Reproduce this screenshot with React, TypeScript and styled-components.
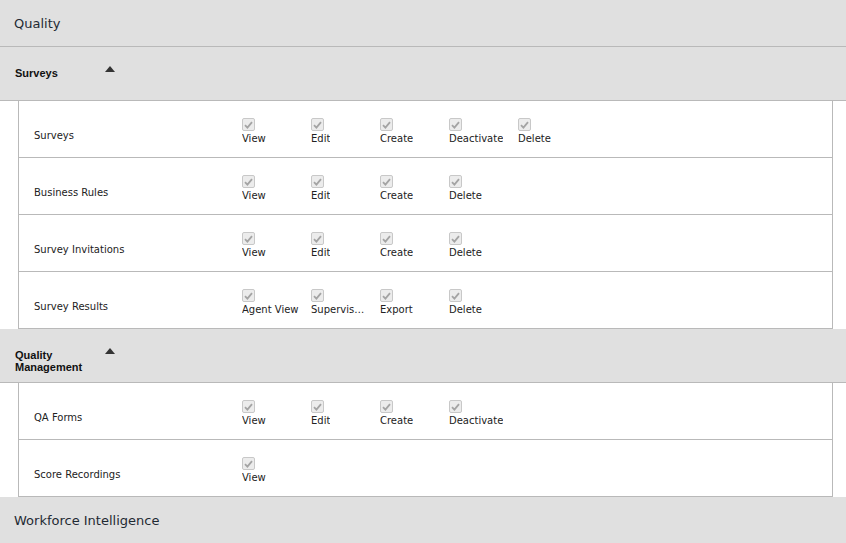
import React, { FC } from "react";
import styled, { createGlobalStyle } from "styled-components";

const GlobalStyle = createGlobalStyle`
  html, body {
    margin: 0;
    padding: 0;
    background: #fff;
  }
  body {
    font-family: "DejaVu Sans", Verdana, sans-serif;
    color: #222;
  }
`;

interface Permission {
    name: string;
    options: string[];
}

interface Group {
    title: string;
    items: Permission[];
}

const groups: Group[] = [
    {
        title: "Surveys",
        items: [
            { name: "Surveys", options: ["View", "Edit", "Create", "Deactivate", "Delete"] },
            { name: "Business Rules", options: ["View", "Edit", "Create", "Delete"] },
            { name: "Survey Invitations", options: ["View", "Edit", "Create", "Delete"] },
            { name: "Survey Results", options: ["Agent View", "Supervisor View", "Export", "Delete"] },
        ],
    },
    {
        title: "Quality Management",
        items: [
            { name: "QA Forms", options: ["View", "Edit", "Create", "Deactivate"] },
            { name: "Score Recordings", options: ["View"] },
        ],
    },
];

const CheckBox: FC = () => (
    <Box>
        <svg width="9" height="8" viewBox="0 0 9 8">
            <path d="M1 4.2 L3.4 6.6 L8 1.2" fill="none" stroke="#a4a4a4" strokeWidth="1.8" />
        </svg>
    </Box>
);

const PermissionRow: FC<{ item: Permission }> = ({ item }) => (
    <Row>
        <RowLabel>{item.name}</RowLabel>
        {item.options.map((opt) => (
            <Option key={opt}>
                <CheckBox />
                <OptionText title={opt}>{opt}</OptionText>
            </Option>
        ))}
    </Row>
);

export default function App() {
    return (
        <>
            <GlobalStyle />
            <Page>
                <ModuleHeader>Quality</ModuleHeader>
                {groups.map((g) => (
                    <section key={g.title}>
                        <GroupHeader>
                            <GroupTitle>{g.title}</GroupTitle>
                            <Arrow />
                        </GroupHeader>
                        <Table>
                            {g.items.map((item) => (
                                <PermissionRow key={item.name} item={item} />
                            ))}
                        </Table>
                    </section>
                ))}
                <ModuleHeader $last>Workforce Intelligence</ModuleHeader>
            </Page>
        </>
    );
}

const Page = styled.div`
display: flex;
flex-direction: column;
width: 846px;
`;

const ModuleHeader = styled.div<{ $last?: boolean }>`
display: flex;
align-items: center;
height: ${(p) => (p.$last ? "46px" : "47px")};
box-sizing: border-box;
padding: 0 14px;
background: #e0e0e0;
border-bottom: ${(p) => (p.$last ? "none" : "1px solid #b9b9b9")};
font-size: 13px;
color: #1f2a33;
`;

const GroupHeader = styled.div`
display: flex;
align-items: flex-start;
height: 54px;
box-sizing: border-box;
padding: 20px 0 0 15px;
background: #e0e0e0;
border-bottom: 1px solid #b9b9b9;
`;

const GroupTitle = styled.div`
width: 90px;
font-family: "Liberation Sans", Arial, sans-serif;
font-weight: bold;
font-size: 11px;
line-height: 12px;
color: #111;
`;

const Arrow = styled.span`
margin-top: -1px;
width: 0;
height: 0;
border-left: 5.5px solid transparent;
border-right: 5.5px solid transparent;
border-bottom: 6px solid #333;
`;

const Table = styled.div`
display: flex;
flex-direction: column;
margin: 0 13px 0 18px;
border-left: 1px solid #b9b9b9;
border-right: 1px solid #b9b9b9;
`;

const Row = styled.div`
display: grid;
grid-template-columns: 208px repeat(5, 69px);
align-items: start;
height: 57px;
box-sizing: border-box;
padding: 17px 0 0 15px;
border-bottom: 1px solid #b9b9b9;
`;

const RowLabel = styled.div`
padding-top: 12px;
font-size: 10px;
line-height: 12px;
`;

const Option = styled.div`
display: flex;
flex-direction: column;
align-items: flex-start;
gap: 2px;
min-width: 0;
`;

const Box = styled.span`
display: flex;
align-items: center;
justify-content: center;
width: 11px;
height: 11px;
border: 1px solid #c8c8c8;
border-radius: 2px;
background: #ececec;
`;

const OptionText = styled.span`
max-width: 59px;
overflow: hidden;
white-space: nowrap;
text-overflow: ellipsis;
font-size: 10px;
line-height: 12px;
`;
